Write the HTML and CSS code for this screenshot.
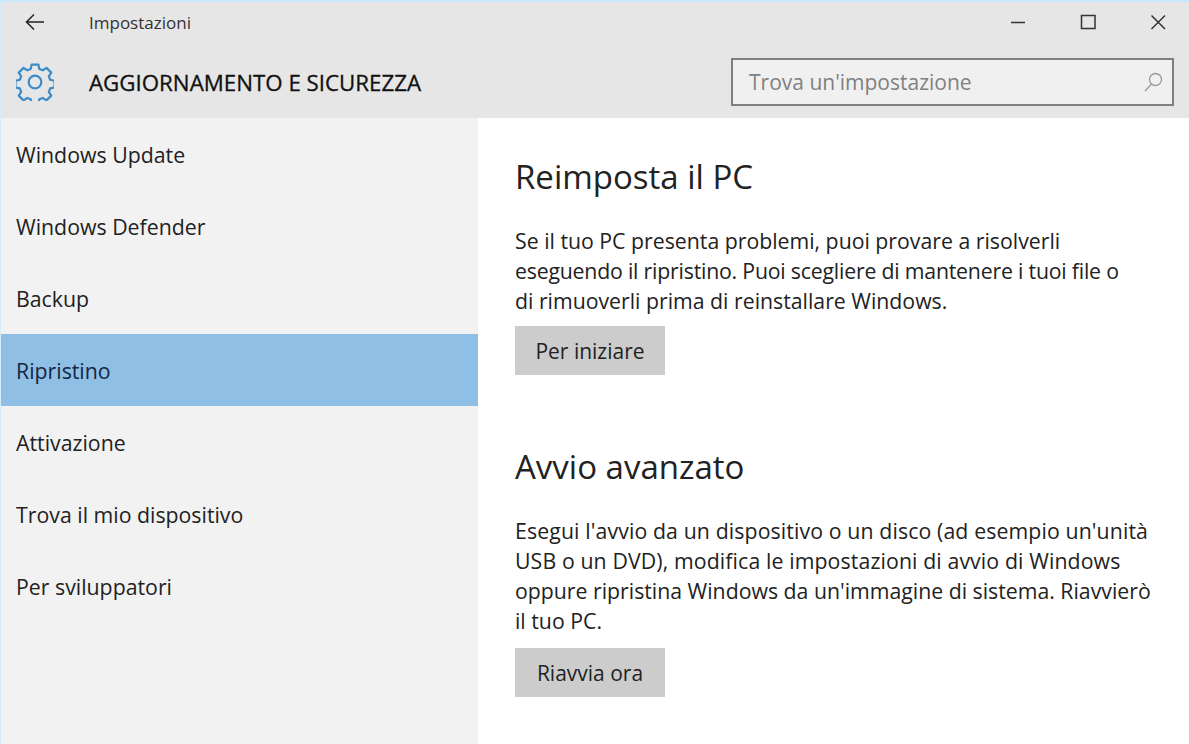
FILE: index.html
```html
<!DOCTYPE html>
<html lang="it">
  <head>
    <meta charset="UTF-8" />
    <title>Impostazioni</title>
    <link rel="stylesheet" href="styles.css" />
  </head>
  <body>
    <div class="window">
      <header class="top">
        <div class="titlebar">
          <div class="titlebar-left">
            <svg class="back" width="20" height="18" viewBox="0 0 20 18" fill="none" stroke="#222" stroke-width="1.5">
              <path d="M1.500 9H19M9 1.500L1.500 9L9 16.500" />
            </svg>
            <span class="app-name">Impostazioni</span>
          </div>
          <div class="win-buttons">
            <svg width="16" height="16" viewBox="0 0 16 16" fill="none" stroke="#333" stroke-width="1.5"><path d="M1 8.500H15" /></svg>
            <svg width="16" height="16" viewBox="0 0 16 16" fill="none" stroke="#333" stroke-width="1.5"><rect x="1.500" y="1.500" width="13.500" height="13" /></svg>
            <svg width="16" height="16" viewBox="0 0 16 16" fill="none" stroke="#333" stroke-width="1.5"><path d="M1.500 1.500L15 15M15 1.500L1.500 15" /></svg>
          </div>
        </div>
        <div class="pagebar">
          <div class="page-title">
            <svg class="gear" width="38" height="38" viewBox="1 1 36 36" fill="none" stroke="#3d8cc8" stroke-width="2.1" stroke-linejoin="round">
              <path d="M15.800 2.500h6.400l.9 4.100 3.200 1.300 3.600-2.300 4.500 4.500-2.300 3.600 1.300 3.200 4.100.9v6.400l-4.100.9-1.300 3.200 2.300 3.600-4.500 4.500-3.600-2.300-3.200 1.300-.9 4.100h-6.400l-.9-4.100-3.200-1.300-3.600 2.300-4.500-4.500 2.300-3.600-1.300-3.200-4.100-.9v-6.400l4.100-.9 1.300-3.200-2.300-3.600 4.500-4.500 3.600 2.300 3.200-1.300z" />
              <circle cx="19" cy="19" r="6" />
            </svg>
            <h1>AGGIORNAMENTO E SICUREZZA</h1>
          </div>
          <div class="search">
            <span>Trova un'impostazione</span>
            <svg width="20" height="20" viewBox="0 0 20 20" fill="none" stroke="#999" stroke-width="1.3">
              <circle cx="12.500" cy="7.500" r="6" />
              <path d="M8.500 12L2 19" />
            </svg>
          </div>
        </div>
      </header>
      <div class="main">
        <nav class="sidebar">
          <a class="nav-item">Windows Update</a>
          <a class="nav-item">Windows Defender</a>
          <a class="nav-item">Backup</a>
          <a class="nav-item active">Ripristino</a>
          <a class="nav-item">Attivazione</a>
          <a class="nav-item">Trova il mio dispositivo</a>
          <a class="nav-item">Per sviluppatori</a>
        </nav>
        <main class="content">
          <section class="block">
            <h2>Reimposta il PC</h2>
            <p>Se il tuo PC presenta problemi, puoi provare a risolverli<br /><span class="tight">eseguendo il ripristino. Puoi scegliere di mantenere i tuoi file o</span><br />di rimuoverli prima di reinstallare Windows.</p>
            <button class="btn">Per iniziare</button>
          </section>
          <section class="block">
            <h2>Avvio avanzato</h2>
            <p class="long"><span class="loose">Esegui l'avvio da un dispositivo o un disco (ad esempio un'unità</span><br /><span class="loose">USB o un DVD), modifica le impostazioni di avvio di Windows</span><br />oppure ripristina Windows da un'immagine di sistema. Riavvierò<br />il tuo PC.</p>
            <button class="btn">Riavvia ora</button>
          </section>
        </main>
      </div>
    </div>
  </body>
</html>
```

FILE: styles.css
```css
html {
  box-sizing: border-box;
  background: #fff;
}

*,
*:before,
*:after {
  box-sizing: inherit;
}

body {
  margin: 0;
  font-family: "Open Sans", "Noto Sans", sans-serif;
  color: #1f1f1f;
}

.window {
  width: 1189px;
  height: 744px;
  overflow: hidden;
  display: flex;
  flex-direction: column;
  border-left: 1px solid #d5ecfb;
}

.top {
  height: 118px;
  flex: none;
  background: #e6e6e6;
  border-top: 2px solid #c9e8fb;
}

.titlebar {
  height: 40px;
  display: flex;
  justify-content: space-between;
  align-items: center;
}

.titlebar-left {
  display: flex;
  align-items: center;
  padding-left: 24px;
}

.app-name {
  margin-left: 44px;
  font-size: 17px;
  color: #333;
}

.win-buttons {
  display: flex;
  gap: 54px;
  padding-right: 23px;
}

.pagebar {
  display: flex;
  justify-content: space-between;
  align-items: center;
  height: 76px;
  padding-top: 4px;
  padding-right: 15px;
}

.page-title {
  display: flex;
  align-items: center;
  padding-left: 15px;
}

.gear {
  flex: none;
}

h1 {
  margin: 0 0 0 35px;
  font-size: 22.3px;
  font-weight: 400;
  color: #111;
  -webkit-text-stroke: 0.3px #111;
}

.search {
  width: 443px;
  height: 48px;
  display: flex;
  justify-content: space-between;
  align-items: center;
  padding: 0 9px 0 16px;
  background: #f0f0f0;
  border: 2px solid #7f7f7f;
  font-size: 21px;
  color: #808080;
}

.main {
  flex: 1;
  display: flex;
}

.sidebar {
  width: 477px;
  flex: none;
  background: #f2f2f2;
}

.nav-item {
  display: flex;
  align-items: center;
  height: 72px;
  padding-left: 15px;
  font-size: 21.3px;
  color: #222;
}

.nav-item.active {
  background: #90bfe6;
  color: #14263f;
}

.content {
  flex: 1;
  padding: 36px 0 0 37px;
}

.block {
  margin-bottom: 69px;
}

h2 {
  margin: 0 0 26px;
  font-size: 33px;
  line-height: 46px;
  font-weight: 400;
  color: #222;
}

p {
  margin: 0 0 10px;
  font-size: 21.27px;
  line-height: 30px;
  color: #222;
}

p.long {
  margin-bottom: 12px;
}

.tight {
  letter-spacing: -0.2px;
}

.loose {
  letter-spacing: 0.12px;
}

.btn {
  display: block;
  width: 150px;
  height: 49px;
  padding: 0;
  border: 0;
  background: #cccccc;
  font: inherit;
  font-size: 21px;
  color: #222;
}
```
